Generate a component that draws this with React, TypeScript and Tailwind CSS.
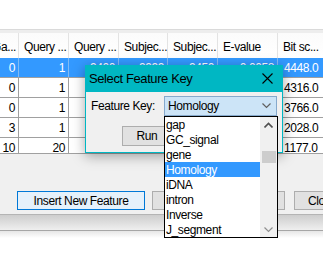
import React from "react";

const headers = ["Ga...", "Query ...", "Query ...", "Subjec...", "Subjec...", "E-value", "Bit sc..."];

// rows 2-5 middle cells sit under the dialog, so they stay blank
const rows = [
  ["0", "1", "9400", "9999", "9450", "0.0058", "4448.0"],
  ["0", "1", "", "", "", "", "4316.0"],
  ["0", "1", "", "", "", "", "3766.0"],
  ["3", "1", "", "", "", "", "2028.0"],
  ["10", "20", "", "", "", "", "1177.0"],
];

const widths = ["w-[19px]", "w-[50px]", "w-[50px]", "w-[49px]", "w-[50px]", "w-[60px]", "w-[100px]"];

const features = ["gap", "GC_signal", "gene", "Homology", "iDNA", "intron", "Inverse", "J_segment"];

const ChevronDown = ({ className }: { className?: string }) => (
  <svg width="9" height="6" viewBox="0 0 9 6" className={className}>
    <polyline points="0.5,0.5 4.5,4.5 8.5,0.5" fill="none" stroke="currentColor" strokeWidth="1.2" />
  </svg>
);

const ChevronUp = ({ className }: { className?: string }) => (
  <svg width="9" height="6" viewBox="0 0 9 6" className={className}>
    <polyline points="0.5,5.5 4.5,1.5 8.5,5.5" fill="none" stroke="currentColor" strokeWidth="1.6" />
  </svg>
);

const App = () => {
  return (
    <div className="relative w-[323px] h-[257px] overflow-hidden bg-white text-black [font-family:'Liberation_Sans',Arial,sans-serif] text-[12px] tracking-[-0.4px]">
      {/* top white */}
      <div className="h-[29px]" />
      <div className="h-[4px] bg-[#ededed] border-t border-[#dadada]" />

      {/* table */}
      <div className="h-[121px] overflow-hidden border-b border-[#a0a0a0]">
        <div className="flex h-[25px] bg-gradient-to-b from-[#fbfbfb] to-[#ffffff]">
          {headers.map((h, i) => (
            <div
              key={i}
              className={`${widths[i]} shrink-0 h-full flex items-center overflow-hidden whitespace-nowrap border-r border-[#e3e3e3] pt-[3px] ${
                i === 0 ? "justify-end pr-[2px]" : "pl-[5px]"
              }`}
            >
              {h}
            </div>
          ))}
        </div>
        {rows.map((r, ri) => {
          const sel = ri === 0;
          return (
            <div
              key={ri}
              className={`flex h-[20px] border-b border-[#a0a0a0] ${sel ? "bg-[#3399ff] text-white" : "bg-white"}`}
            >
              {r.map((c, ci) => (
                <div
                  key={ci}
                  className={`${widths[ci]} shrink-0 h-full flex items-center overflow-hidden whitespace-nowrap border-r ${
                    sel ? "border-[#7fbaf5]" : "border-[#a0a0a0]"
                  } ${ci === 6 ? "pl-[6px]" : "justify-end pr-[3px]"}`}
                >
                  {c}
                </div>
              ))}
            </div>
          );
        })}
      </div>

      {/* button strip */}
      <div className="h-[60px] bg-[#f0f0f0] flex items-start gap-[8px] pl-[17px] pt-[37px]">
        <button className="w-[128px] h-[19px] shrink-0 border border-[#0078d7] bg-[#e5f1fb] flex items-center justify-center">
          Insert New Feature
        </button>
        <button className="w-[133px] h-[19px] shrink-0 ml-[-1px] border border-[#adadad] bg-[#e1e1e1]" />
        <button className="w-[90px] h-[19px] shrink-0 ml-[1px] border border-[#adadad] bg-[#e1e1e1] flex items-center justify-start pl-[13px]">
          Close
        </button>
      </div>
      <div className="h-[16px] border-t border-[#b4b4b4] bg-gradient-to-b from-[#cdcdcd] to-[#efefef]" />
      <div className="h-[8px] border-t border-[#a6a6a6] bg-gradient-to-b from-[#e6e6e6] to-[#ffffff]" />
      <div className="h-[20px] pl-[88px] pt-[14px] text-[10px] leading-none text-[#444] tracking-[1px]">
        . .....
      </div>

      {/* dialog */}
      <div className="absolute left-[85px] top-[65px] w-[198px] h-[88px] flex flex-col shadow-[0_3px_12px_rgba(0,0,0,0.35)]">
        <div className="h-[27px] bg-[#00b7c3] flex items-center justify-between pl-[4px] pr-[10px] text-[13px]">
          <span>Select Feature Key</span>
          <svg width="11" height="11" viewBox="0 0 11 11">
            <path d="M0.5 0.5 L10.5 10.5 M10.5 0.5 L0.5 10.5" stroke="#000" strokeWidth="1.1" />
          </svg>
        </div>
        <div className="flex-1 bg-[#f0f0f0] border border-t-0 border-[#00b7c3] flex flex-col">
          <div className="flex items-center h-[20px] mt-[4px]">
            <span className="pl-[5px] w-[78px]">Feature Key:</span>
            <div className="w-[113px] h-[20px] border border-[#86a9cc] bg-[#cce4f7] flex items-center justify-between pl-[3px] pr-[5px]">
              <span>Homology</span>
              <ChevronDown className="text-[#606060]" />
            </div>
          </div>
          <div className="flex mt-[10px] pl-[36px]">
            <button className="w-[50px] h-[20px] border border-[#adadad] bg-[#e1e1e1] flex items-center justify-center">
              Run
            </button>
          </div>
        </div>
      </div>

      {/* dropdown list */}
      <div className="absolute left-[164px] top-[116px] w-[114px] h-[122px] border border-black bg-white flex">
        <div className="flex-1 flex flex-col">
          {features.map((f) => (
            <div
              key={f}
              className={`h-[15px] flex items-center pl-[1px] ${f === "Homology" ? "bg-[#3399ff] text-white" : ""}`}
            >
              {f}
            </div>
          ))}
        </div>
        <div className="w-[17px] bg-[#f0f0f0] flex flex-col items-center">
          <div className="h-[15px] flex items-center">
            <ChevronUp className="text-[#505050]" />
          </div>
          <div className="h-[19px]" />
          <div className="w-[14px] h-[12px] bg-[#cdcdcd]" />
          <div className="flex-1" />
          <div className="h-[15px] flex items-center">
            <ChevronDown className="text-[#909090]" />
          </div>
        </div>
      </div>
    </div>
  );
};

export default App;
